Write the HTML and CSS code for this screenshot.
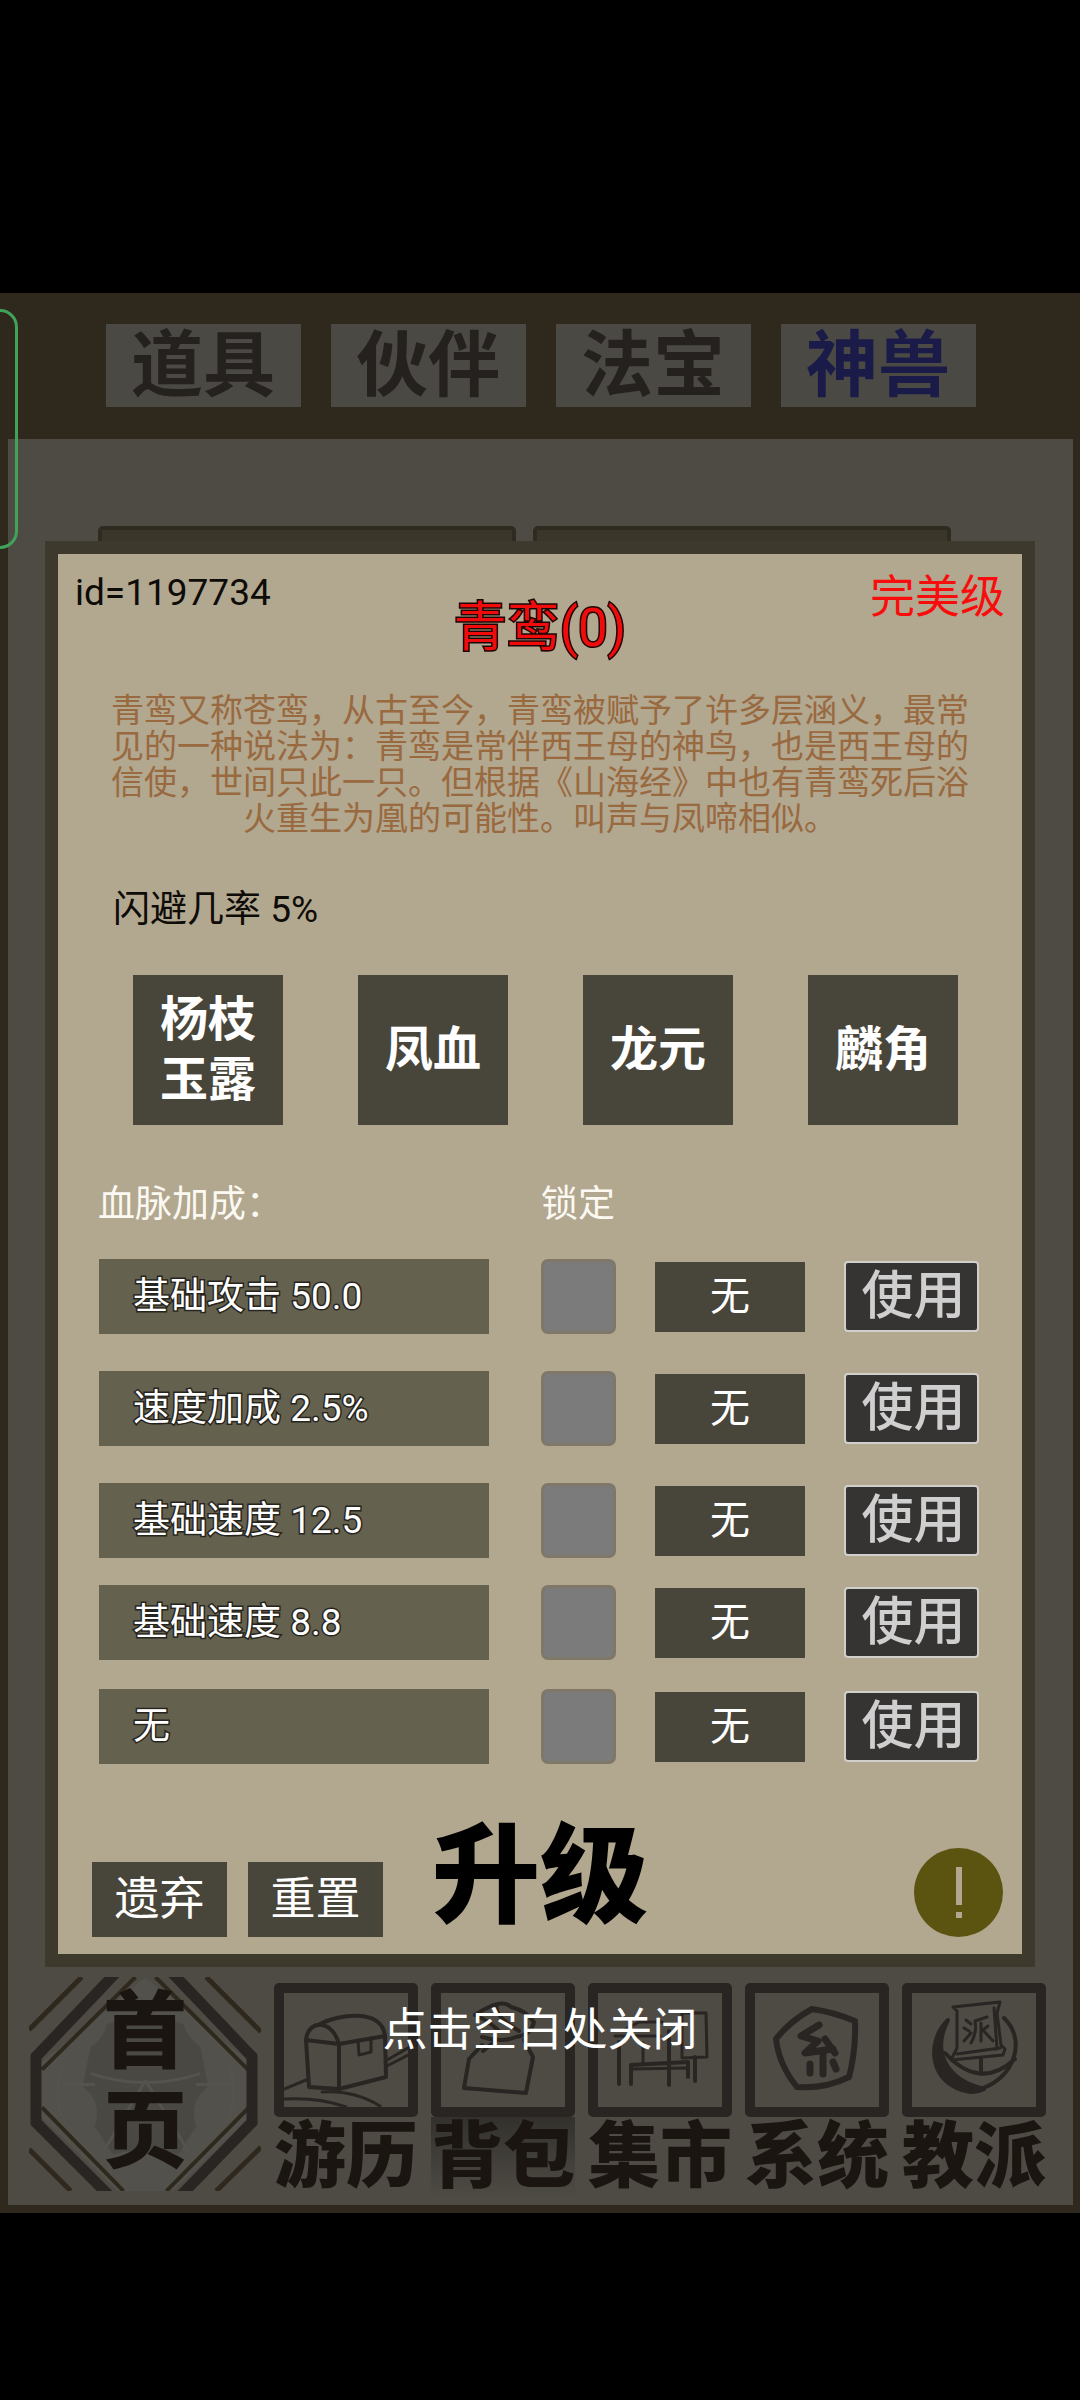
FILE: index.html
```
<!DOCTYPE html>
<html lang="zh-CN">

<head>
  <meta charset="UTF-8">
  <meta name="viewport" content="width=device-width, initial-scale=1.0">
  <title>神兽</title>
  <link rel="stylesheet" href="styles.css">
</head>

<body>
  <div class="game">
    <nav class="tabs">
      <button class="tab">道具</button>
      <button class="tab">伙伴</button>
      <button class="tab">法宝</button>
      <button class="tab active">神兽</button>
    </nav>

    <main class="board">
      <div class="slots">
        <div class="slot"></div>
        <div class="slot"></div>
      </div>

      <nav class="menu">
        <a class="home" href="#">
          <svg viewBox="0 0 233 215" fill="none">
            <path d="M117 0 L222 86 V140 L145 215 H89 L12 140 V86 Z" fill="#53514b"/>
            <path d="M62 70 Q75 62 78 48 Q95 40 117 48 Q140 40 155 48 Q160 62 172 70 L180 110 Q160 125 168 150 L150 178 Q117 170 84 178 L66 150 Q74 125 54 110 Z" fill="#4a4843"/>
            <path d="M35 88 Q24 110 32 140 M200 88 Q210 110 202 140 M62 97 Q117 115 172 97 M117 104 L75 175 M117 104 L160 175 M34 108 H66 M168 108 H202" stroke="#55534e" stroke-width="3"/>
            <path d="M53 0 L0 53 M178 0 L233 55 M0 173 L42 215 M233 171 L188 215" stroke="#2f291d" stroke-width="5"/>
            <path d="M107 0 L13 93 M127 0 L221 94 M13 131 L95 215 M221 131 L138 215" stroke="#2f291d" stroke-width="4"/>
            <path d="M87 -4 L7 80 V146 L80 219 M144 -4 L224 80 V146 L153 219" stroke="#292522" stroke-width="11"/>
          </svg>
          <span>首<br>页</span>
        </a>

        <a class="item" href="#">
          <svg viewBox="10 10 124 114">
            <path d="M32 57 L35 104 L65 106 L112 94 L111 53 L65 61 L32 57"/>
            <path d="M32 57 C34 36 58 36 65 61 V104 M46 41 C65 31 108 25 111 53"/>
            <path d="M84 57 L85 72 L97 69 V55 M10 106 L32 97 M10 116 Q45 114 72 124 M48 109 Q80 107 106 123 M113 77 L134 65 M113 83 L134 72" stroke-width="3"/>
          </svg>
          <span>游历</span>
        </a>
        <a class="item shaded" href="#">
          <svg viewBox="10 10 124 114">
            <path d="M51 62 L38 76 L33 105 L95 110 L102 74 L93 57"/>
            <path d="M44 32 Q70 14 80 24 Q96 28 103 39 Q100 52 85 54 Q70 60 51 54 M44 32 Q58 38 68 48 M66 22 Q62 32 88 48 M52 68 L64 58"/>
          </svg>
          <span>背包</span>
        </a>
        <a class="item" href="#">
          <svg viewBox="10 10 124 114">
            <path d="M31 59 V101 M43 101 V82 L100 79 V94 M81 48 V102 M107 74 V98"/>
            <path d="M94 30 H118 L119 74 L94 75 Z M27 53 H72 M38 46 L51 39 H74 M55 60 V80 M43 86 L100 85" stroke-width="3"/>
          </svg>
          <span>集市</span>
        </a>
        <a class="item" href="#">
          <svg viewBox="10 10 124 114">
            <path d="M31 56 Q45 38 67 26 Q88 29 110 38 Q111 68 104 94 Q80 106 52 104 Q34 82 31 56 Z" stroke-width="6"/>
            <path d="M74 42 L56 53 L73 58 L60 70 L88 66 M80 56 L90 70 M78 70 V91 M65 81 V90 M88 79 L91 86" stroke-width="7"/>
          </svg>
          <span>系统</span>
        </a>
        <a class="item" href="#">
          <svg viewBox="10 10 124 114">
            <path class="solid" d="M46 37 C24 58 26 102 68 109 C74 109 78 108 82 106 C48 98 28 72 46 37 Z"/>
            <path d="M68 108 C108 104 128 60 102 35 M43 70 Q78 108 113 76 M79 74 V91" stroke-width="4"/>
            <path d="M51 24 L98 19 L95 30 L99 62 L103 66 L101 72 L49 77 L55 65 L55 28 Z M92 25 L95 66 M55 71 L98 65" fill="#4e4b45" stroke-width="3"/>
            <path d="M64 37 L69 41 M62 45 L67 48 M62 58 L69 50 M73 38 L85 34 M73 38 Q75 50 69 60 M79 40 V58 M80 46 L91 58 M86 43 L81 47" stroke-width="3"/>
          </svg>
          <span>教派</span>
        </a>
      </nav>
    </main>

    <div class="float-tab"></div>

    <div class="overlay">
      <section class="modal">
        <header class="modal-header">
          <span class="pet-id">id=1197734</span>
          <h1>青鸾(0)</h1>
          <span class="grade">完美级</span>
        </header>

        <p class="intro">青鸾又称苍鸾，从古至今，青鸾被赋予了许多层涵义，最常见的一种说法为：青鸾是常伴西王母的神鸟，也是西王母的信使，世间只此一只。但根据《山海经》中也有青鸾死后浴火重生为凰的可能性。叫声与凤啼相似。</p>
        <p class="trait">闪避几率 5%</p>

        <div class="materials">
          <button>杨枝玉露</button>
          <button>凤血</button>
          <button>龙元</button>
          <button>麟角</button>
        </div>

        <div class="blood-row blood-head">
          <span>血脉加成：</span>
          <span>锁定</span>
        </div>

        <div class="blood-list">
          <div class="blood-row">
            <label class="attr" for="lock1">基础攻击 50.0</label>
            <input type="checkbox" id="lock1">
            <button class="none">无</button>
            <button class="use">使用</button>
          </div>
          <div class="blood-row">
            <label class="attr" for="lock2">速度加成 2.5%</label>
            <input type="checkbox" id="lock2">
            <button class="none">无</button>
            <button class="use">使用</button>
          </div>
          <div class="blood-row">
            <label class="attr" for="lock3">基础速度 12.5</label>
            <input type="checkbox" id="lock3">
            <button class="none">无</button>
            <button class="use">使用</button>
          </div>
          <div class="blood-row">
            <label class="attr" for="lock4">基础速度 8.8</label>
            <input type="checkbox" id="lock4">
            <button class="none">无</button>
            <button class="use">使用</button>
          </div>
          <div class="blood-row">
            <label class="attr" for="lock5">无</label>
            <input type="checkbox" id="lock5">
            <button class="none">无</button>
            <button class="use">使用</button>
          </div>
        </div>

        <footer class="modal-footer">
          <div class="actions">
            <button>遗弃</button>
            <button>重置</button>
          </div>
          <button class="upgrade">升级</button>
          <button class="help" aria-label="说明">
            <svg viewBox="0 0 89 89">
              <path d="M42 19 H48 V57 H42 Z M42 64 H48 V70 H42 Z" fill="#b2a78f"/>
            </svg>
          </button>
        </footer>
      </section>
      <p class="close-tip">点击空白处关闭</p>
    </div>
  </div>
</body>

</html>
```

FILE: styles.css
```
* {
  box-sizing: border-box;
}

body {
  margin: 0;
  padding-top: 293px;
  min-height: 100vh;
  background: #000;
  font-family: Roboto, "Noto Sans CJK SC", sans-serif;
}

h1,
p {
  margin: 0;
}

button {
  margin: 0;
  padding: 0;
  border: none;
  font-family: inherit;
  cursor: pointer;
}

a {
  color: inherit;
  text-decoration: none;
}

.game {
  position: relative;
  display: flex;
  flex-direction: column;
  min-height: 1920px;
  padding: 0 7px 8px 8px;
  background: #2f291d;
}

/* top tabs */
.tabs {
  display: flex;
  justify-content: center;
  gap: 30px;
  padding: 31px 0 32px;
}

.tab {
  width: 195px;
  height: 83px;
  background: #4b4943;
  color: #24211f;
  font-size: 72px;
  font-weight: bold;
  line-height: 80px;
}

.tab.active {
  color: #1b1b4a;
}

.board {
  flex: 1;
  display: flex;
  flex-direction: column;
  justify-content: space-between;
  padding: 87px 27px 13px 21px;
  background: #4e4b45;
}

.slots {
  display: flex;
  gap: 17px;
  margin: 0 95px 0 69px;
}

.slot {
  flex: 1;
  height: 200px;
  border: 4px solid #2f2b20;
  border-radius: 5px;
  background: #3a3629;
}

/* bottom menu */
.menu {
  display: flex;
  align-items: flex-end;
  gap: 13px;
  color: #1a1511;
}

.menu svg {
  display: block;
}

.home {
  display: grid;
  flex: 1;
  max-width: 233px;
  height: 215px;
}

.home svg,
.home span {
  grid-area: 1 / 1;
}

.home span {
  padding-top: 6px;
  font-size: 84px;
  font-weight: 900;
  line-height: 100px;
  text-align: center;
}

.item {
  width: 144px;
  height: 209px;
}

.item svg {
  width: 100%;
  height: 134px;
  border: 10px solid #292522;
  border-radius: 5px;
  fill: none;
  stroke: #292522;
  stroke-width: 4;
  stroke-linejoin: round;
  stroke-linecap: round;
}

.item .solid {
  fill: #292522;
}

.item span {
  display: block;
  font-size: 72px;
  font-weight: 900;
  line-height: 80px;
  white-space: nowrap;
}

.shaded span {
  background: linear-gradient(#33312c, #4e4b45);
}

.float-tab {
  position: absolute;
  top: 16px;
  left: -20px;
  width: 38px;
  height: 240px;
  border: 3px solid #3fa35a;
  border-radius: 18px;
}

/* pet dialog */
.overlay {
  position: absolute;
  top: 248px;
  left: 45px;
  right: 45px;
}

.modal {
  border: 13px solid #3d392d;
  padding-top: 14px;
  background: #b2a78f;
}

.modal-header {
  display: grid;
  grid-template-columns: 1fr auto 1fr;
  align-items: start;
  padding: 0 17px;
}

.pet-id {
  color: #0e0c08;
  font-size: 37px;
  line-height: 50px;
}

h1 {
  margin-top: 30px;
  color: #f00c0c;
  font-size: 53px;
  font-weight: normal;
  line-height: 60px;
  -webkit-text-stroke: 3px #1c0503;
  paint-order: stroke fill;
}

.grade {
  color: #f80d0d;
  font-size: 45px;
  line-height: 60px;
  text-align: right;
}

.intro {
  max-width: 858px;
  margin: 35px auto 0;
  color: #99693f;
  font-size: 33px;
  line-height: 36px;
  text-align: center;
}

.trait {
  margin: 49px 55px 0;
  color: #0e0c08;
  font-size: 37px;
  line-height: 48px;
}

.materials {
  display: flex;
  justify-content: space-between;
  margin: 41px 64px 0 75px;
}

.materials button {
  width: 150px;
  height: 150px;
  padding: 0 23px;
  background: #48453a;
  color: #fff;
  font-size: 48px;
  font-weight: bold;
  line-height: 60px;
}

/* attribute | lock | material | use */
.blood-row {
  display: grid;
  grid-template-columns: 1fr 75px 150px 135px;
  column-gap: 39px;
  align-items: center;
}

.blood-head {
  margin: 56px 43px 0 40px;
  color: #fbf9f2;
  font-size: 37px;
  line-height: 48px;
  white-space: nowrap;
}

.blood-list {
  display: grid;
  grid-template-rows: 112px 112px 102px 104px 75px;
  align-items: start;
  margin: 30px 43px 0 41px;
}

.attr {
  margin-right: 13px;
  padding-left: 34px;
  background: #64614f;
  color: #fff;
  font-size: 37px;
  line-height: 75px;
  -webkit-text-stroke: 3px #26241e;
  paint-order: stroke fill;
}

.blood-row input {
  appearance: none;
  width: 75px;
  height: 75px;
  margin: 0;
  border: 3px solid #7f7768;
  border-radius: 7px;
  background: #7b7b7b;
}

.none {
  height: 70px;
  background: #48453a;
  color: #fff;
  font-size: 40px;
  line-height: 66px;
}

.use {
  height: 71px;
  padding-left: 4px;
  border: 2px solid #d0cfcb;
  border-radius: 4px;
  background: #353432;
  color: #d0cfcf;
  font-size: 52px;
  font-weight: 500;
  line-height: 66px;
}

.modal-footer {
  display: grid;
  grid-template-columns: 1fr auto 1fr;
  align-items: end;
  margin-top: 53px;
  padding: 0 19px 17px;
}

.actions {
  display: flex;
  gap: 21px;
  padding-left: 15px;
}

.actions button {
  width: 135px;
  height: 75px;
  background: #48453a;
  color: #fff;
  font-size: 45px;
  line-height: 70px;
}

.upgrade {
  height: 120px;
  background: none;
  color: #000;
  font-size: 108px;
  font-weight: 900;
  line-height: 120px;
}

.help {
  justify-self: end;
  width: 89px;
  height: 89px;
  border-radius: 50%;
  background: #5a5410;
}

.help svg {
  display: block;
}

.close-tip {
  margin-top: 34px;
  color: #fff;
  font-size: 45px;
  line-height: 60px;
  text-align: center;
}
```
